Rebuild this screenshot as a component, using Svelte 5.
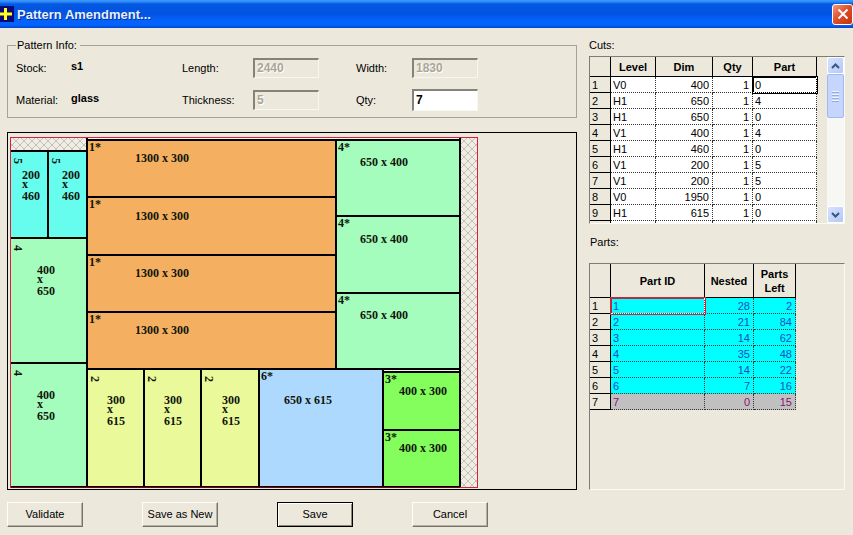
<script>
const info = {
  stock: 's1',
  material: 'glass',
  length: '2440',
  thickness: '5',
  width: '1830',
}
let qty = $state('7')

const cuts = [
  ['V0', 400, 1, 0],
  ['H1', 650, 1, 4],
  ['H1', 650, 1, 0],
  ['V1', 400, 1, 4],
  ['H1', 460, 1, 0],
  ['V1', 200, 1, 5],
  ['V1', 200, 1, 5],
  ['V0', 1950, 1, 0],
  ['H1', 615, 1, 0],
]

const parts = [
  { id: 1, nested: 28, left: 2 },
  { id: 2, nested: 21, left: 84 },
  { id: 3, nested: 14, left: 62 },
  { id: 4, nested: 35, left: 48 },
  { id: 5, nested: 14, left: 22 },
  { id: 6, nested: 7, left: 16 },
  { id: 7, nested: 0, left: 15 },
]

const colors = { 1: '#f4b060', 2: '#eafa9a', 3: '#84fe5c', 4: '#a4fdbc', 5: '#66fdee', 6: '#aed9fe' }

// x, y, w, h on the sheet; tx, ty is where the size text starts inside the piece
const pieces = [
  { part: 5, x: 2, y: 18, w: 38, h: 87, size: [200, 460], turned: true, tx: 12, ty: 28 },
  { part: 5, x: 40, y: 18, w: 39, h: 87, size: [200, 460], turned: true, tx: 14, ty: 28 },
  { part: 4, x: 2, y: 105, w: 77, h: 125, size: [400, 650], turned: true, tx: 27, ty: 36 },
  { part: 4, x: 2, y: 230, w: 77, h: 124, size: [400, 650], turned: true, tx: 27, ty: 36 },
  { part: 1, x: 79, y: 7, w: 249, h: 57, size: [1300, 300], tx: 48, ty: 22 },
  { part: 1, x: 79, y: 64, w: 249, h: 58, size: [1300, 300], tx: 48, ty: 23 },
  { part: 1, x: 79, y: 122, w: 249, h: 57, size: [1300, 300], tx: 48, ty: 22 },
  { part: 1, x: 79, y: 179, w: 249, h: 57, size: [1300, 300], tx: 48, ty: 22 },
  { part: 4, x: 328, y: 7, w: 124, h: 76, size: [650, 400], tx: 24, ty: 26 },
  { part: 4, x: 328, y: 83, w: 124, h: 77, size: [650, 400], tx: 24, ty: 27 },
  { part: 4, x: 328, y: 160, w: 124, h: 76, size: [650, 400], tx: 24, ty: 26 },
  { part: 2, x: 79, y: 236, w: 57, h: 118, size: [300, 615], turned: true, tx: 20, ty: 35 },
  { part: 2, x: 136, y: 236, w: 57, h: 118, size: [300, 615], turned: true, tx: 20, ty: 35 },
  { part: 2, x: 193, y: 236, w: 58, h: 118, size: [300, 615], turned: true, tx: 21, ty: 35 },
  { part: 6, x: 251, y: 236, w: 124, h: 118, size: [650, 615], tx: 25, ty: 35 },
  { part: 3, x: 375, y: 239, w: 77, h: 58, size: [400, 300], tx: 16, ty: 23 },
  { part: 3, x: 375, y: 297, w: 77, h: 57, size: [400, 300], tx: 16, ty: 22 },
]
</script>

<div class="window">
  <header class="titlebar">
    <svg class="app-icon" viewBox="0 0 14 16">
      <rect width="14" height="16" fill="#0a0a78"/>
      <path d="M5.500 2v12M0 8h12" stroke="#ffff20" stroke-width="3"/>
    </svg>
    <h1>Pattern Amendment...</h1>
    <button class="close" aria-label="Close">
      <svg viewBox="0 0 12 12"><path d="M1.500 1.500l9 9M10.500 1.500l-9 9" stroke="#fff" stroke-width="2"/></svg>
    </button>
  </header>

  <main class="content">
    <section class="left">
      <fieldset class="info">
        <legend>Pattern Info:</legend>
        <div class="fields">
          <span>Stock:</span>
          <strong>{info.stock}</strong>
          <label for="length">Length:</label>
          <input id="length" value={info.length} disabled />
          <label for="width">Width:</label>
          <input id="width" value={info.width} disabled />
          <span>Material:</span>
          <strong>{info.material}</strong>
          <label for="thickness">Thickness:</label>
          <input id="thickness" value={info.thickness} disabled />
          <label for="qty">Qty:</label>
          <input id="qty" bind:value={qty} />
        </div>
      </fieldset>

      <div class="canvas">
        <svg class="sheet" viewBox="0 0 568 356" role="img" aria-label="Cutting pattern">
          <defs>
            <pattern id="waste" width="8" height="8" patternUnits="userSpaceOnUse">
              <rect width="8" height="8" fill="#efede4"/>
              <path d="M0 0l8 8M8 0l-8 8" stroke="#c3c0b8" stroke-width="1"/>
            </pattern>
            <clipPath id="stock-edge"><rect x="3" y="5" width="466" height="350"/></clipPath>
          </defs>
          <g clip-path="url(#stock-edge)">
            <rect x="3" y="5" width="76" height="13" fill="url(#waste)"/>
            <rect x="453" y="5" width="16" height="349" fill="url(#waste)"/>
            <rect x="79" y="5" width="373" height="2" fill="#f6f4ea"/>
            <rect x="375" y="236" width="77" height="3" fill="#f6f4ea"/>
            {#each pieces as p}
              <g transform="translate({p.x} {p.y})">
                <rect class="piece" width={p.w} height={p.h} fill={colors[p.part]}/>
                {#if p.turned}
                  <text transform="translate(4 7) rotate(90)">{p.part}</text>
                  <text x={p.tx} y={p.ty}>{p.size[0]}</text>
                  <text x={p.tx} y={p.ty + 9}>x</text>
                  <text x={p.tx} y={p.ty + 21}>{p.size[1]}</text>
                {:else}
                  <text x="2" y="11">{p.part}*</text>
                  <text x={p.tx} y={p.ty}>{p.size[0]} x {p.size[1]}</text>
                {/if}
              </g>
            {/each}
            <path d="M79 5v13M452 5v349" stroke="#000" stroke-width="2"/>
          </g>
          <rect class="edge" x="2.500" y="4.500" width="467" height="350"/>
          <path d="M3 354.500h449" stroke="#7a0010"/>
        </svg>
      </div>
    </section>

    <section class="right">
      <h2 id="cuts-title">Cuts:</h2>
      <div class="panel cuts">
        <div class="viewport">
          <table aria-labelledby="cuts-title">
            <colgroup>
              <col class="w-num" /><col class="w-level" /><col class="w-dim" /><col class="w-qty" /><col class="w-part" />
            </colgroup>
            <thead>
              <tr><th></th><th>Level</th><th>Dim</th><th>Qty</th><th>Part</th></tr>
            </thead>
            <tbody>
              {#each cuts as [level, dim, count, part], i}
                <tr>
                  <th>{i + 1}</th>
                  <td>{level}</td>
                  <td class="num">{dim}</td>
                  <td class="num">{count}</td>
                  <td class:selected={i === 0}>{part}</td>
                </tr>
              {/each}
              <tr><th></th><td></td><td></td><td></td><td></td></tr>
            </tbody>
          </table>
        </div>
        <div class="scrollbar">
          <button aria-label="Scroll up"><svg viewBox="0 0 9 6"><path d="M1 5l3.500-3.500L8 5"/></svg></button>
          <div class="track">
            <div class="thumb"><i></i><i></i><i></i><i></i></div>
          </div>
          <button aria-label="Scroll down"><svg viewBox="0 0 9 6"><path d="M1 1l3.500 3.500L8 1"/></svg></button>
        </div>
      </div>

      <h2 id="parts-title" class="parts-title">Parts:</h2>
      <div class="panel parts">
        <table aria-labelledby="parts-title">
          <colgroup>
            <col class="w-num" /><col class="w-id" /><col class="w-nested" /><col class="w-left" />
          </colgroup>
          <thead>
            <tr><th></th><th>Part ID</th><th>Nested</th><th>Parts<br />Left</th></tr>
          </thead>
          <tbody>
            {#each parts as part, i}
              <tr class:unused={part.nested === 0}>
                <th>{i + 1}</th>
                <td class:selected={i === 0}>{part.id}</td>
                <td class="num">{part.nested}</td>
                <td class="num">{part.left}</td>
              </tr>
            {/each}
          </tbody>
        </table>
      </div>
    </section>
  </main>

  <footer class="actions">
    <button>Validate</button>
    <button>Save as New</button>
    <button class="default">Save</button>
    <button>Cancel</button>
  </footer>
</div>

<style>
:global(body) { margin: 0; background: #ece9dc; }
.window { display: flex; flex-direction: column; min-height: 100vh; box-sizing: border-box; background: #ece9dc; color: #000; font: 11px/13px "Liberation Sans", Arial, sans-serif; }

.titlebar { display: flex; align-items: center; height: 28px; background: linear-gradient(#3d9bff 0, #2a86f5 2px, #0458e0 4px, #0353e2 14px, #0362fb 20px, #0364fd 25px, #0345cc 28px); }
.app-icon { flex-shrink: 0; width: 14px; height: 16px; margin-right: 3px; }
h1 { flex: 1; margin: 0; padding-top: 2px; font: bold 13px/16px "Liberation Sans", Arial, sans-serif; color: #e4f2ff; text-shadow: 1px 1px 0 #0a2f9c; }
.close { display: flex; align-items: center; justify-content: center; width: 21px; height: 21px; padding: 0; border: 1px solid #fff; border-radius: 3px; background: linear-gradient(135deg, #f0977c, #dd4b25 50%, #c2350f); }
.close svg { flex-shrink: 0; width: 12px; height: 12px; }

.content { display: grid; grid-template-columns: minmax(0, 1fr) 256px; column-gap: 12px; padding: 11px 8px 0 7px; }
.left { display: flex; flex-direction: column; gap: 14px; min-width: 0; }
.right { display: flex; flex-direction: column; }

.info { margin: 0; padding: 0 8px 1px; min-width: 0; border: 1px solid #a5a296; }
legend { padding: 0 3px 0 1px; }
.fields { display: grid; grid-template-columns: 54px 112px 71px 103px 56px 66px; grid-auto-rows: 32px; align-items: center; }
.fields strong { font-weight: bold; padding: 0 0 3px 1px; }
input { box-sizing: border-box; width: 66px; height: 20px; padding: 0 2px 2px; border: 2px solid; border-color: #85827a #f8f7f0 #f8f7f0 #85827a; border-width: 2px 1px 1px 2px; border-radius: 0; background: #fff; color: #000; font: bold 12px "Liberation Sans", Arial, sans-serif; }
input:disabled { background: transparent; color: #a9a698; text-shadow: 1px 1px 0 #fff; }
#qty { height: 22px; }

.canvas { border: 1px solid #000; }
.sheet { display: block; width: 100%; height: auto; }
.sheet text { font: bold 12px "Liberation Serif", "Times New Roman", serif; fill: #10140a; }
.piece { stroke: #000; stroke-width: 2; }
.edge { fill: none; stroke: #d8203c; }

h2 { margin: 0 0 4px; font: inherit; }
.parts-title { margin: 12px 0 14px; padding-left: 1px; }
.panel { box-sizing: border-box; border: 1px solid; border-color: #7e7c74 #fbfaf5 #fbfaf5 #7e7c74; }
.cuts { display: flex; justify-content: space-between; height: 168px; }
.viewport { overflow: hidden; padding-right: 2px; }
.parts { flex: 1; }

table { table-layout: fixed; width: min-content; border-collapse: separate; border-spacing: 0; }
.w-num { width: 21px; }
.w-level { width: 45px; }
.w-dim { width: 57px; }
.w-qty { width: 40px; }
.w-part { width: 64px; }
.w-id { width: 94px; }
.w-nested { width: 49px; }
.w-left { width: 42px; }
th, td { box-sizing: border-box; height: 16px; padding: 0 2px; border-right: 1px solid #000; border-bottom: 1px solid #000; line-height: 14px; text-align: left; font-weight: normal; }
thead th { height: 20px; text-align: center; font-weight: bold; }
.parts thead th { height: 34px; }
td { position: relative; background: #fff; border-style: dotted; border-color: #333; border-width: 0 1px 1px 0; }
td.num { padding-right: 3px; text-align: right; }
.parts td { background: #00ffff; color: #1450c0; }
.parts .unused td { background: #c0c0c0; color: #8a1070; }
td.selected { z-index: 1; }
.selected::before { content: ''; position: absolute; inset: -1px -2px -2px -1px; border: 2px solid #000; }
.selected::after { content: ''; position: absolute; inset: 0 -1px -1px 0; border-right: 1px dotted #fff; border-bottom: 1px dotted #fff; }
.parts .selected::before { border-color: #c02840; }

.scrollbar { display: flex; flex-direction: column; width: 17px; background: #f7f7f4; }
.scrollbar button { display: flex; align-items: center; justify-content: center; height: 17px; padding: 0; border: 1px solid #fff; border-radius: 2px; background: linear-gradient(135deg, #d6e2ff, #b4c8f8); }
.scrollbar svg { width: 9px; height: 6px; fill: none; stroke: #3c5580; stroke-width: 2; }
.track { flex: 1; }
.thumb { box-sizing: border-box; display: flex; flex-direction: column; align-items: center; justify-content: center; gap: 1px; height: 44px; border: 1px solid #a3b8ee; border-radius: 2px; background: #c6d5fd; }
.thumb i { width: 7px; height: 1px; background: #eef4ff; border-bottom: 1px solid #94abe0; }

.actions { display: flex; gap: 59px; padding: 12px 7px 8px; }
.actions button { box-sizing: border-box; width: 76px; height: 25px; padding: 0; border: 1px solid; border-color: #fffef8 #76746a #76746a #fffef8; box-shadow: inset -1px -1px 0 #b4b1a3; border-radius: 0; background: #ece9dc; color: #000; font: inherit; white-space: nowrap; }
.actions .default { border-color: #000; box-shadow: inset 1px 1px 0 #fffef8, inset -1px -1px 0 #8b887c; }
</style>
